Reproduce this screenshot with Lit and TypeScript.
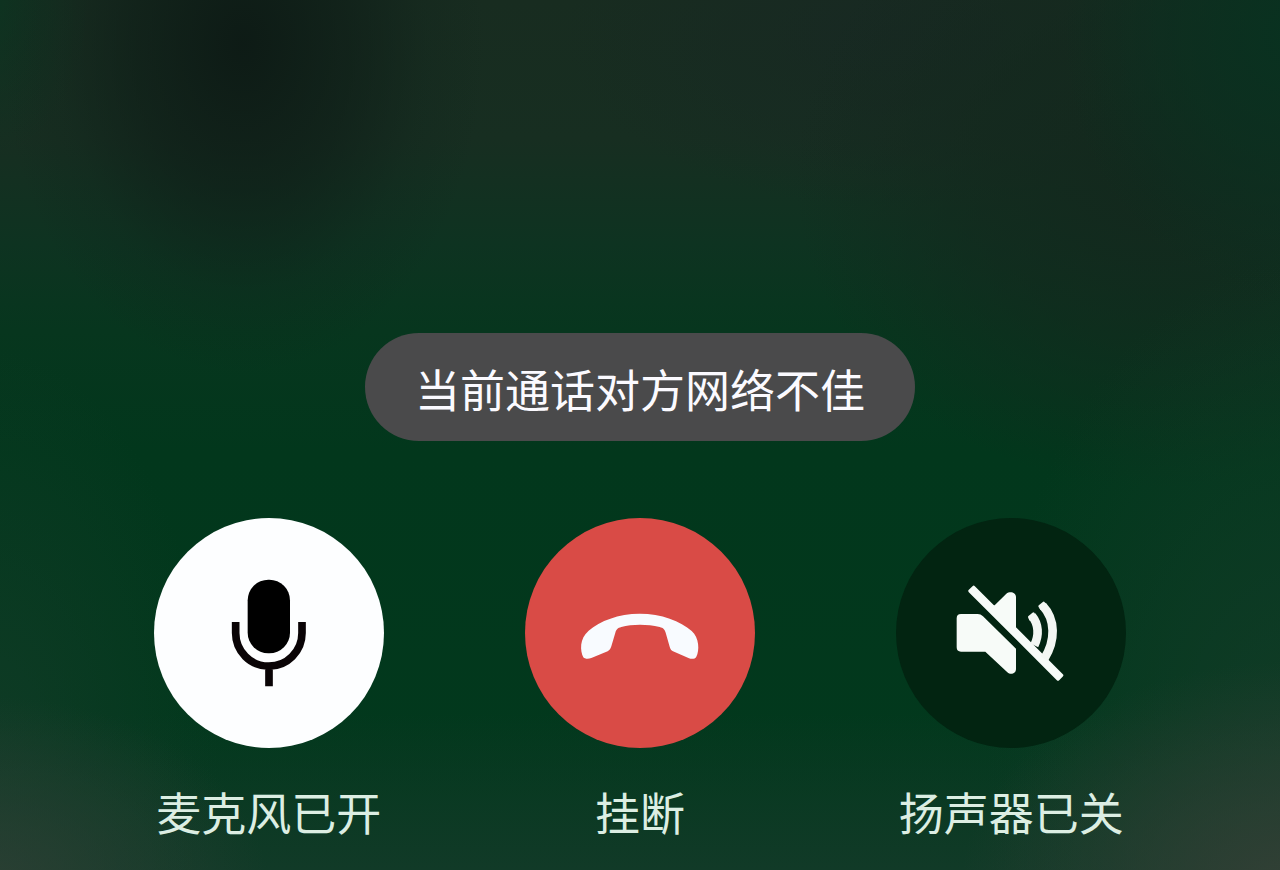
import { LitElement, html, css, svg } from "lit";
import { customElement, state } from "lit/decorators.js";

const micIcon = svg`
  <svg viewBox="0 0 690 690" aria-hidden="true">
    <rect x="281" y="185" width="127" height="221" rx="62" fill="#000" />
    <path
      d="M245 312V345A99.5 99.5 0 0 0 444 345V312M345 444V505"
      fill="none" stroke="#0a0406" stroke-width="23"
    />
  </svg>`;

const hangUpIcon = svg`
  <svg viewBox="45 40 690 690" aria-hidden="true">
    <path
      fill="#f8fbff"
      d="M389 327C454 327 512 349 545 379C568 400 569 438 559 456C556 463 545 464 537 461L489 440C483 437 481 433 479 426L467 384C464 374 460 370 449 367C430 362 410 360 390 360C370 360 350 362 334 367C323 370 319 374 316 384L304 425C302 432 299 437 293 440L244 460C235 464 224 463 220 458C210 438 208 402 236 378C270 349 325 327 389 327Z"
    />
  </svg>`;

const speakerOffIcon = svg`
  <svg viewBox="35 40 690 690" aria-hidden="true">
    <g fill="#f7fbf8">
      <path d="M230 328H280Q289 328 296 335L395 432V493C395 507 379 512 369 503L303 441H230Q217 441 217 428V341Q217 328 230 328Z" />
      <path d="M331 302L366 267C377 258 395 263 395 277V385L315 305Z" />
      <path
        d="M268 248L532 512L521 523L257 259Z"
        stroke="#f7fbf8" stroke-width="10" stroke-linejoin="round"
      />
    </g>
    <g fill="none" stroke="#f3f7f3" stroke-width="26">
      <path d="M443 334C463 358 465 392 450 422" />
      <path d="M475 303C514 345 514 407 480 462" />
    </g>
    <g fill="#f3f7f3" stroke="#f3f7f3" stroke-width="8" stroke-linejoin="round">
      <path d="M435 337L447 327L450 333L438 344Z" />
      <path d="M466 305L478 295L483 301L471 312Z" />
    </g>
  </svg>`;

@customElement("app-root")
export class AppRoot extends LitElement {
  @state() private controls = [
    { id: "mic", label: "麦克风已开", icon: micIcon },
    { id: "hangup", label: "挂断", icon: hangUpIcon },
    { id: "speaker", label: "扬声器已关", icon: speakerOffIcon },
  ];

  static styles = css`
    :host {
      display: block;
      font-family: "Noto Sans CJK SC", "Noto Sans", sans-serif;
    }
    .call {
      box-sizing: border-box;
      min-height: 100vh;
      display: flex;
      flex-direction: column;
      justify-content: flex-end;
      align-items: center;
      gap: 77px;
      padding-bottom: 34px;
      background:
        radial-gradient(ellipse 26% 26% at 101% 102%, rgb(54 64 55 / 0.9), transparent),
        radial-gradient(ellipse 22% 22% at -1% 102%, rgb(48 64 54 / 0.8), transparent),
        radial-gradient(ellipse 24% 60% at 101% 90%, rgb(22 60 42 / 0.8), transparent),
        radial-gradient(ellipse 18% 50% at -1% 90%, rgb(22 60 42 / 0.7), transparent),
        linear-gradient(to top, rgb(18 58 40 / 0.95), transparent 18%),
        radial-gradient(ellipse 19% 38% at 19% 5%, rgb(13 26 21 / 0.95), rgb(14 29 23 / 0.6) 45%, rgb(15 33 26 / 0.2) 75%, transparent),
        radial-gradient(ellipse 8% 18% at -1% 0%, rgb(8 54 32 / 0.7), transparent),
        radial-gradient(ellipse 18% 30% at 101% 4%, rgb(8 50 32 / 0.95), rgb(9 49 32 / 0.6) 50%, transparent),
        radial-gradient(ellipse 28% 36% at 90% 20%, rgb(19 40 29 / 0.95), rgb(19 40 29 / 0.6) 50%, transparent),
        radial-gradient(ellipse 26% 20% at 70% 4%, rgb(24 40 35 / 0.8), transparent),
        linear-gradient(to bottom, #182c20 0%, #172e21 16%, #0e3321 28%, #07361e 38%, #02371c 52%, #02391d 100%);
    }
    .toast {
      box-sizing: border-box;
      padding: 32px 50px 28px;
      border-radius: 54px;
      background: #4a4a4b;
      color: #fbfaff;
      font-size: 45px;
      line-height: 48px;
      text-align: center;
    }
    .controls {
      box-sizing: border-box;
      width: 100%;
      padding: 0 6.5%;
      display: grid;
      grid-template-columns: repeat(3, 1fr);
    }
    .control {
      display: flex;
      flex-direction: column;
      align-items: center;
      gap: 40px;
    }
    .round {
      width: 230px;
      height: 230px;
      padding: 0;
      border: 0;
      border-radius: 50%;
      cursor: pointer;
    }
    .round svg {
      display: block;
      width: 100%;
      height: 100%;
    }
    .mic {
      background: #fdfeff;
    }
    .hangup {
      background: #d94b46;
    }
    .speaker {
      background: #022411;
    }
    .label {
      color: #dceee3;
      font-size: 45px;
      line-height: 48px;
      white-space: nowrap;
    }
  `;

  render() {
    return html`
      <main class="call">
        <div class="toast" role="status">当前通话对方网络不佳</div>
        <div class="controls">
          ${this.controls.map(
            (c) => html`
              <div class="control">
                <button class="round ${c.id}" id=${c.id} type="button">${c.icon}</button>
                <label class="label" for=${c.id}>${c.label}</label>
              </div>
            `
          )}
        </div>
      </main>
    `;
  }
}
